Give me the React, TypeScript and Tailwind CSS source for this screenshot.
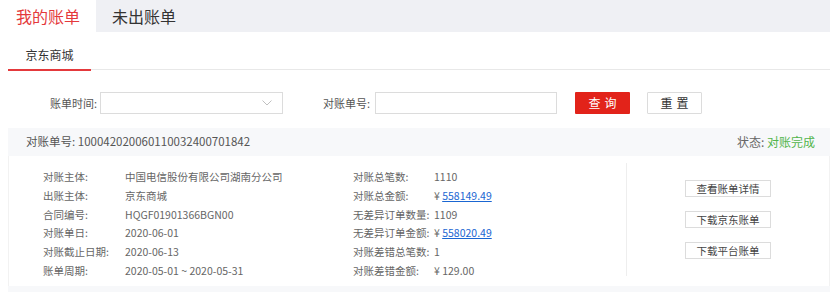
import React from "react";

const font = { fontFamily: '"Noto Sans CJK SC", "Noto Sans", sans-serif' };

function Row({ label, children, lw }: { label: string; children: React.ReactNode; lw: string }) {
  return (
    <div className="flex items-center h-[18.67px] whitespace-nowrap">
      <div className={`${lw} text-[#666]`}>{label}</div>
      <div className="text-[#666]">{children}</div>
    </div>
  );
}

export default function App() {
  return (
    <div className="w-[830px] h-[292px] bg-white overflow-hidden" style={font}>
      {/* top tabs */}
      <div className="flex h-8 bg-[#eff0f4]">
        <div className="w-24 bg-white flex items-center justify-center text-[16px] text-[#e4393c]">我的账单</div>
        <div className="w-24 flex items-center justify-center text-[16px] text-[#333]">未出账单</div>
      </div>

      {/* sub tab */}
      <div className="ml-2 flex h-[38px] border-b border-[#e8e8e8]">
        <div className="w-[83px] h-[39px] border-b-2 border-[#e4393c] pt-[15px] flex justify-center text-[12px] leading-4 text-[#333]">
          京东商城
        </div>
      </div>

      {/* filter row */}
      <div className="mt-[22px] flex items-center h-[22px] text-[11px] text-[#555]">
        <div className="w-[97px] text-right">账单时间:</div>
        <div className="ml-[3px] w-[183px] h-[22px] border border-[#dcdcdc] bg-white flex items-center justify-end pr-[10px]">
          <svg width="10" height="6" viewBox="0 0 10 6" fill="none">
            <path d="M0.5 0.5 L5 5 L9.5 0.5" stroke="#c0c0c0" strokeWidth="1" />
          </svg>
        </div>
        <div className="w-[87px] text-right">对账单号:</div>
        <div className="ml-[5px] w-[182px] h-[22px] border border-[#dcdcdc] bg-white" />
        <div className="ml-[18px] w-[55px] h-[22px] bg-[#e2231a] text-white text-[12px] flex items-center justify-center tracking-[4px] pl-[4px] rounded-[1px]">
          查询
        </div>
        <div className="ml-[17px] w-[55px] h-[22px] border border-[#dcdcdc] bg-white text-[#333] text-[12px] flex items-center justify-center tracking-[4px] pl-[4px] rounded-[1px]">
          重置
        </div>
      </div>

      {/* card */}
      <div className="ml-2 mt-[14px]">
        <div className="h-[28px] bg-[#f7f8fa] flex items-center justify-between pl-[18px] pr-[15px] text-[11.5px]">
          <div className="text-[#555]">对账单号: 100042020060110032400701842</div>
          <div className="text-[#666] text-[12px]">
            状态: <span className="text-[#52b54b]">对账完成</span>
          </div>
        </div>
        <div className="h-[130px] flex border-l border-r border-[#f2f2f2] pl-[34px] text-[10.5px]">
          <div className="w-[310px] pt-[12px]">
            <Row lw="w-[82px]" label="对账主体:">中国电信股份有限公司湖南分公司</Row>
            <Row lw="w-[82px]" label="出账主体:">京东商城</Row>
            <Row lw="w-[82px]" label="合同编号:">HQGF01901366BGN00</Row>
            <Row lw="w-[82px]" label="对账单日:">2020-06-01</Row>
            <Row lw="w-[82px]" label="对账截止日期:">2020-06-13</Row>
            <Row lw="w-[82px]" label="账单周期:">2020-05-01 ~ 2020-05-31</Row>
          </div>
          <div className="w-[273px] pt-[12px]">
            <Row lw="w-[81px]" label="对账总笔数:">1110</Row>
            <Row lw="w-[81px]" label="对账总金额:">
              ¥ <span className="text-[#1a66d2] underline">558149.49</span>
            </Row>
            <Row lw="w-[81px]" label="无差异订单数量:">1109</Row>
            <Row lw="w-[81px]" label="无差异订单金额:">
              ¥ <span className="text-[#1a66d2] underline">558020.49</span>
            </Row>
            <Row lw="w-[81px]" label="对账差错总笔数:">1</Row>
            <Row lw="w-[81px]" label="对账差错金额:">¥ 129.00</Row>
          </div>
          <div className="self-start mt-[7px] h-[113px] w-px bg-[#eeeeee]" />
          <div className="flex-1 flex flex-col items-center pt-[24px] gap-[14px] text-[10.5px] text-[#444]">
            <div className="w-[86px] h-[17px] border border-[#dcdcdc] flex items-center justify-center">查看账单详情</div>
            <div className="w-[86px] h-[17px] border border-[#dcdcdc] flex items-center justify-center">下载京东账单</div>
            <div className="w-[86px] h-[17px] border border-[#dcdcdc] flex items-center justify-center">下载平台账单</div>
          </div>
        </div>
        <div className="h-[6px] bg-[#f7f8fa]" />
      </div>
    </div>
  );
}
